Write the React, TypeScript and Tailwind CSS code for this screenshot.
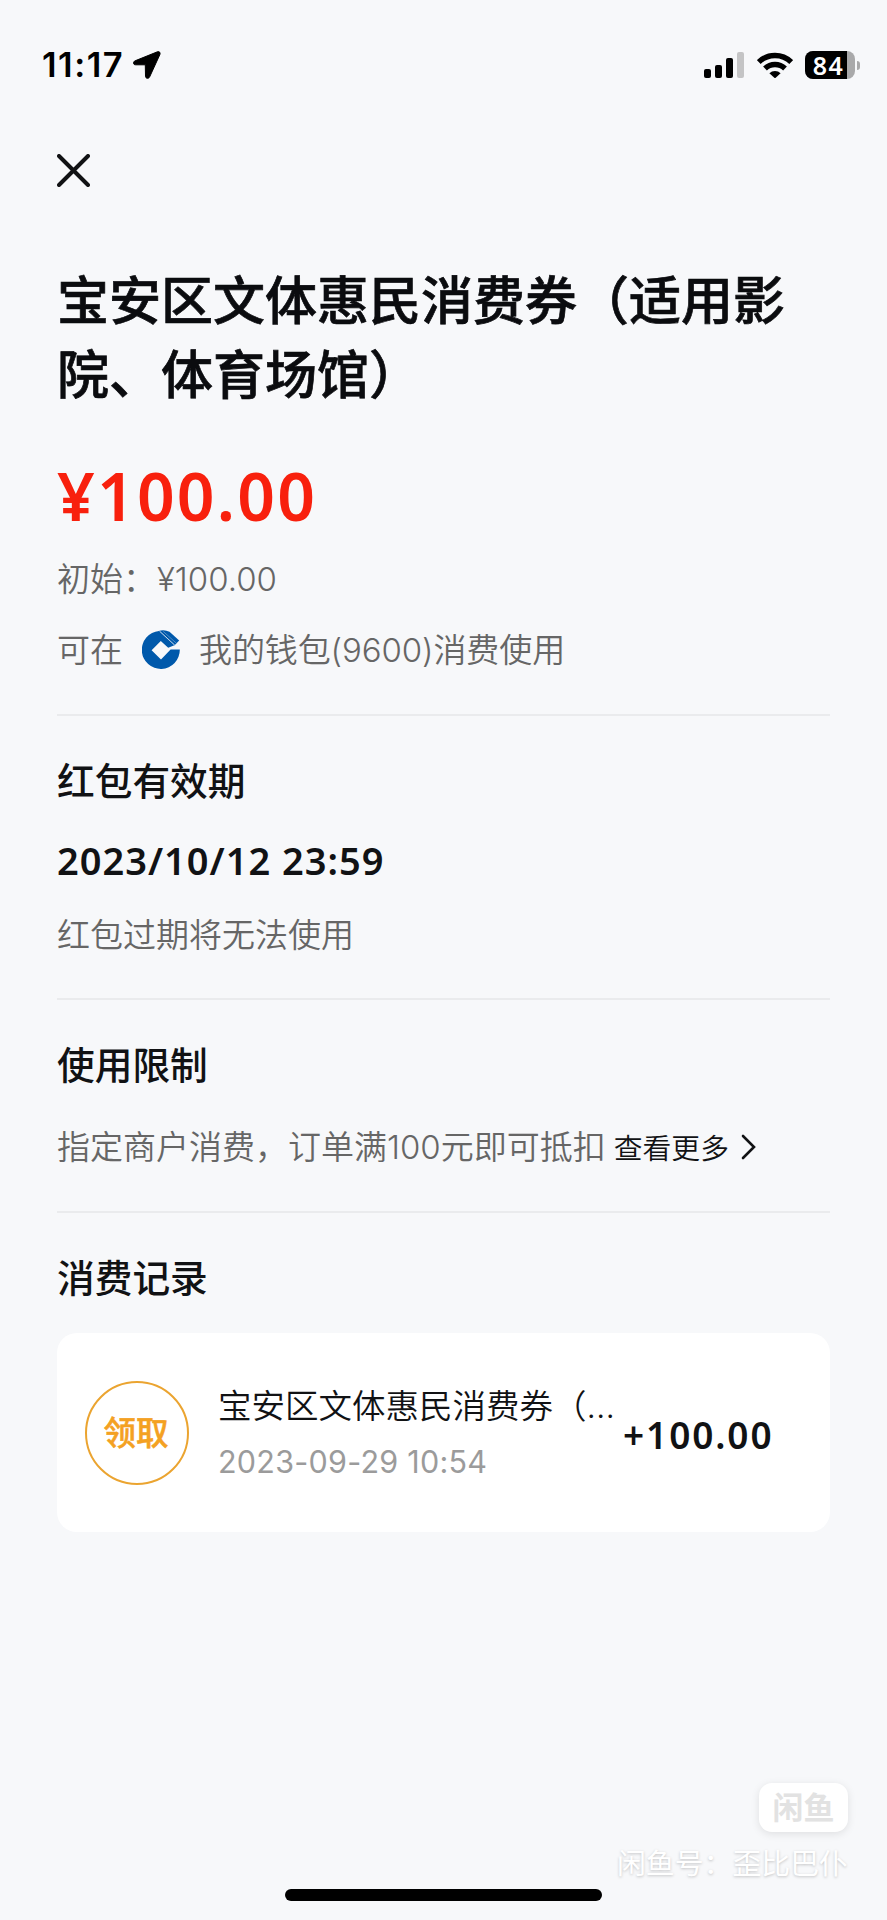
const records = [
  {
    type: "领取",
    title: "宝安区文体惠民消费券（...",
    time: "2023-09-29 10:54",
    amount: "+100.00",
  },
];

function StatusBar() {
  return (
    <div className="flex h-[130px] items-center justify-between pl-[42px] pr-[27px] text-black">
      <div className="flex items-center">
        <span className="w-[91px] text-[34.5px] font-semibold leading-none tracking-[1.5px]">
          11:17
        </span>
        <svg className="h-[28px] w-[28px]" viewBox="0 0 28 28">
          <path
            d="M24.4 .8 2.1 9.8C-.3 10.9 0 13.8 2.6 13.8H12.3L12.5 25.2C12.6 27.8 15.7 28 16.7 25.8L26.9 3.5C27.6 1.5 26.3 .1 24.4 .8Z"
            fill="currentColor"
            stroke="currentColor"
          />
        </svg>
      </div>
      <div className="flex items-center">
        <div className="flex h-[26px] items-end gap-[4px]">
          <div className="h-[9px] w-[7px] rounded-[2px] bg-black" />
          <div className="h-[13px] w-[7px] rounded-[2px] bg-black" />
          <div className="h-[20px] w-[7px] rounded-[2px] bg-black" />
          <div className="h-[26px] w-[7px] rounded-[2px] bg-[#c4c4c5]" />
        </div>
        <svg className="ml-[13px] h-[26px] w-[36px]" viewBox="0 0 36 26">
          <g fill="none" stroke="currentColor" strokeWidth="5.4">
            <path d="M1.8 10A23.3 23.3 0 0 1 34.2 10" />
            <path d="M8 16.5A14.4 14.4 0 0 1 28 16.5" />
          </g>
          <path
            d="M12.4 21.2A8 8 0 0 1 23.6 21.2L18.7 25.8Q18 26.3 17.3 25.8Z"
            fill="currentColor"
          />
        </svg>
        <div className="ml-[12px] flex h-[28px] w-[50px] rounded-[8px] bg-[#a9a9aa]">
          <div className="flex h-[28px] w-[42px] items-center justify-center rounded-l-[8px] bg-black pl-[5px] font-['Noto_Sans',sans-serif] text-[25px] font-semibold leading-[28px] tracking-[1.5px] text-white">
            84
          </div>
        </div>
        <div className="ml-[2px] h-[9px] w-[3px] rounded-r-full bg-[#a9a9aa]" />
      </div>
    </div>
  );
}

function BankLogo() {
  return (
    <svg className="-mt-[2px] h-[39px] w-[38px]" viewBox="0 0 38 39">
      <path
        d="M17 1A19 19 0 1 0 37.8 19.6H28.6L19 29.6 9.6 20.2 18.8 11 26.2 17.8 32.4 15.2Z"
        fill="#0059ab"
      />
      <path d="M16.5 1.1Q22-1 27.5 1.8L37.2 10.4 32.4 15.6Z" fill="#0059ab" />
      <path d="M17.6 1.2 32.8 15.2" stroke="#dce8f3" strokeWidth=".9" />
      <path d="M21.2 1.4 34.8 13.6" stroke="#9fc0de" strokeWidth=".5" />
    </svg>
  );
}

function Divider() {
  return <div className="h-[2px] w-full bg-[#eaebed]" />;
}

function SectionTitle({ children }: { children: string }) {
  return (
    <h2 className="text-[37.7px] font-medium leading-[54px] text-[#111214]">
      {children}
    </h2>
  );
}

function RecordCard({ record }: { record: (typeof records)[number] }) {
  return (
    <div className="mt-[28px] flex h-[199px] rounded-[20px] bg-white pl-[28px]">
      <div className="mt-[48px] flex h-[104px] w-[104px] shrink-0 items-center justify-center rounded-full border-[2.5px] border-[#eba430] pr-[2px] pt-[2px] text-[32.5px] font-medium leading-none text-[#f4a122] [-webkit-text-stroke:0.5px_#f4a122]">
        {record.type}
      </div>
      <div className="ml-[29px] mt-[48px] w-[405px] shrink-0">
        <p className="whitespace-nowrap text-[33.5px] font-[350] leading-[50px] text-[#111214]">
          {record.title}
        </p>
        <p className="mt-[6px] whitespace-nowrap text-[30.5px] font-normal leading-[50px] tracking-[0.25px] text-[#9b9b9b]">
          {record.time}
        </p>
      </div>
      <p className="mt-[77px] font-['Noto_Sans',sans-serif] text-[37px] font-semibold leading-[50px] tracking-[1.9px] text-[#111214]">
        {record.amount}
      </p>
    </div>
  );
}

function Watermark() {
  return (
    <div className="absolute bottom-[39px] right-[39px] flex flex-col items-end">
      <div className="flex h-[49px] w-[89px] items-center justify-center rounded-[13px] bg-white text-[31px] font-bold leading-none text-[#e2e2e2] shadow-[0_2px_8px_rgba(0,0,0,0.1)]">
        闲鱼
      </div>
      <p className="mt-[15px] whitespace-nowrap text-[28.9px] font-normal leading-[34px] text-white [text-shadow:0_1px_3px_rgba(0,0,0,0.22)]">
        闲鱼号：歪比巴仆
      </p>
    </div>
  );
}

function App() {
  return (
    <div
      lang="zh-CN"
      className="relative h-[1920px] w-[887px] overflow-hidden bg-[#f7f8fa] font-['Inter','Noto_Sans_CJK_SC',sans-serif]"
    >
      <StatusBar />
      <button className="flex h-[80px] items-center pl-[57px]">
        <svg className="h-[33px] w-[33px]" viewBox="0 0 33 33">
          <path
            d="M2 2 31 31M31 2 2 31"
            stroke="#111214"
            strokeWidth="4"
            strokeLinecap="round"
          />
        </svg>
      </button>

      <main className="ml-[57px] w-[773px]">
        <h1 className="mt-[55px] text-[52px] font-medium leading-[73.5px] text-[#0b0c0f] [-webkit-text-stroke:0.7px_#0b0c0f]">
          宝安区文体惠民消费券（适用影
          <br />
          院、体育场馆）
        </h1>
        <p className="mt-[43px] font-['Noto_Sans',sans-serif] text-[66px] font-semibold leading-[80px] tracking-[2.2px] text-[#f8200d]">
          ¥100.00
        </p>
        <p className="mt-[19px] text-[33px] font-[350] leading-[50px] text-[#666]">
          初始：<span className="ml-px">¥100.00</span>
        </p>
        <div className="mb-[39px] mt-[21px] flex items-center text-[33px] font-[350] leading-[50px] text-[#666]">
          <span className="mr-[19px]">可在</span>
          <BankLogo />
          <span className="ml-[19px] tracking-[-0.1px]">
            我的钱包(9600)消费使用
          </span>
        </div>
        <Divider />

        <section className="mb-[38px] mt-[38px]">
          <SectionTitle>红包有效期</SectionTitle>
          <p className="mt-[27px] font-['Noto_Sans',sans-serif] text-[38px] font-semibold leading-[50px] tracking-[1px] text-[#111214]">
            2023/10/12 23:59
          </p>
          <p className="mt-[25px] text-[33px] font-[350] leading-[50px] text-[#666]">
            红包过期将无法使用
          </p>
        </section>
        <Divider />

        <section className="mb-[39px] mt-[38px]">
          <SectionTitle>使用限制</SectionTitle>
          <div className="mt-[30px] flex items-center">
            <p className="whitespace-nowrap text-[33px] font-[350] leading-[50px] text-[#666]">
              指定商户消费，订单满100元即可抵扣
            </p>
            <button className="ml-[8px] flex items-center whitespace-nowrap text-[28.8px] font-[350] leading-[50px] text-[#111214]">
              <span className="pt-[3px] leading-[47px]">查看更多</span>
              <svg className="ml-[12px] h-[26px] w-[15px]" viewBox="0 0 15 26">
                <path
                  d="M2 2 13 13 2 24"
                  fill="none"
                  stroke="currentColor"
                  strokeWidth="2.6"
                  strokeLinecap="round"
                />
              </svg>
            </button>
          </div>
        </section>
        <Divider />

        <section className="mt-[38px]">
          <SectionTitle>消费记录</SectionTitle>
          {records.map((record) => (
            <RecordCard key={record.time} record={record} />
          ))}
        </section>
      </main>

      <Watermark />
      <div className="absolute bottom-[19px] left-[285px] h-[12px] w-[317px] rounded-full bg-black" />
    </div>
  );
}

export default App;
